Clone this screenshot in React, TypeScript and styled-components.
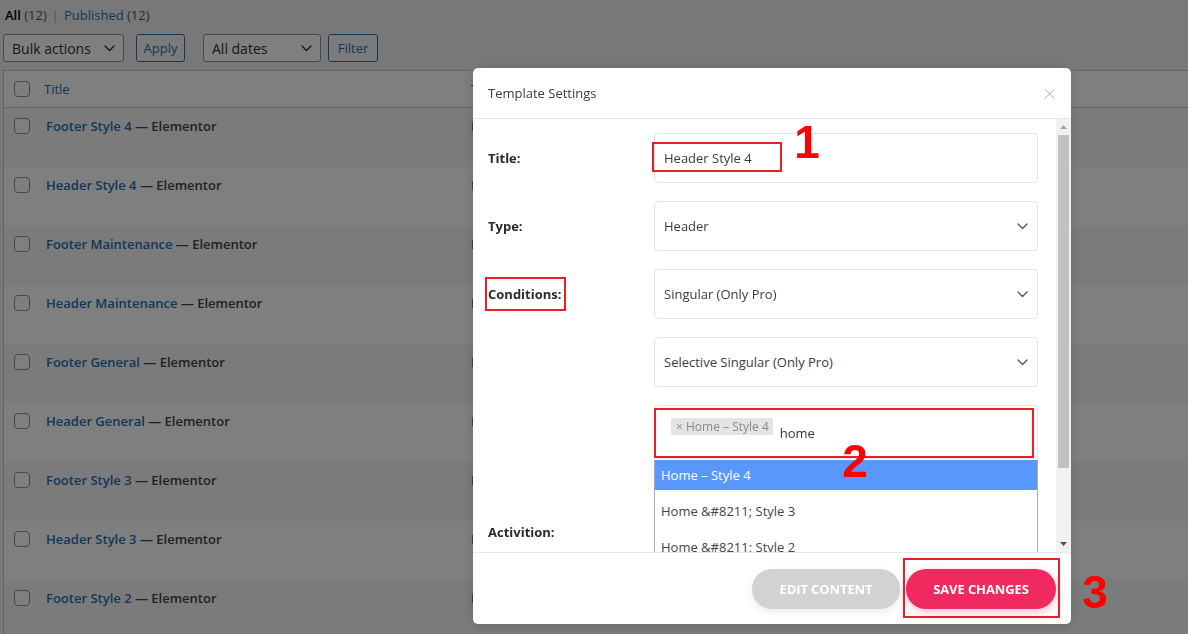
import React from "react";
import styled, { createGlobalStyle } from "styled-components";

const GlobalStyle = createGlobalStyle`
  html, body { margin: 0; padding: 0; }
  body {
    background: #f0f0f1;
    font-family: "Open Sans", "Noto Sans", Arial, sans-serif;
    font-size: 13px;
    color: #3c434a;
    overflow: hidden;
  }
  * { box-sizing: border-box; }
`;

/* ---------- WordPress list page (behind the modal) ---------- */
const Page = styled.div`
  padding: 6px 0 0 3px;
  width: 1188px;
  height: 634px;
  overflow: hidden;
`;

const Views = styled.div`
  padding-left: 2px;
  height: 20px;
  line-height: 18px;
  font-size: 13px;
  color: #50575e;
  b { color: #000; font-weight: 600; }
  a { color: #2271b1; text-decoration: none; }
  span.sep { margin: 0 5px; color: #a7aaad; }
`;

const TableNav = styled.div`
  margin-top: 8px;
  display: flex;
  align-items: center;
  height: 28px;
`;

const Select = styled.div<{ $w: number; $ml?: number }>`
  width: ${(p) => p.$w}px;
  margin-left: ${(p) => p.$ml ?? 0}px;
  height: 28px;
  border: 1px solid #8c8f94;
  border-radius: 3px;
  background: #fff;
  color: #2c3338;
  font-size: 14px;
  display: flex;
  align-items: center;
  justify-content: space-between;
  padding: 0 8px;
`;

const NavButton = styled.div<{ $w: number; $ml: number }>`
  width: ${(p) => p.$w}px;
  margin-left: ${(p) => p.$ml}px;
  height: 28px;
  border: 1px solid #2271b1;
  border-radius: 3px;
  background: #f6f7f7;
  color: #2271b1;
  font-size: 13px;
  display: flex;
  align-items: center;
  justify-content: center;
`;

const Table = styled.div`
  margin-top: 8px;
  border: 1px solid #c3c4c7;
  border-right: none;
  background: #fff;
`;

const HeadRow = styled.div`
  display: grid;
  grid-template-columns: 40px 425px 1fr;
  height: 37px;
  align-items: center;
  border-bottom: 1px solid #c3c4c7;
  a { color: #2271b1; }
`;

const Row = styled.div<{ $odd: boolean }>`
  display: grid;
  grid-template-columns: 40px 425px 1fr;
  height: 59px;
  align-items: start;
  padding-top: 8px;
  background: ${(p) => (p.$odd ? "#f6f7f7" : "#fff")};
`;

const CheckCell = styled.div`
  padding-left: 10px;
  display: flex;
`;

const Checkbox = styled.div<{ $mt?: number }>`
  width: 16px;
  height: 16px;
  margin-top: ${(p) => p.$mt ?? 0}px;
  border: 1px solid #8c8f94;
  border-radius: 4px;
  background: #fff;
`;

const TitleCell = styled.div<{ $pl: number }>`
  padding-left: ${(p) => p.$pl}px;
  line-height: 20px;
  font-size: 13px;
  white-space: nowrap;
`;

const RowTitle = styled.span`
  color: #2271b1;
  font-weight: 600;
  font-size: 13px;
`;

const PostState = styled.span`
  color: #3c434a;
  font-weight: 600;
`;

/* only a sliver of this column shows left of the modal */
const TypeCell = styled.div`
  margin-left: 2px;
  width: 4px;
  overflow: hidden;
  line-height: 20px;
  color: #3c434a;
`;

/* ---------- Overlay & modal ---------- */
const Backdrop = styled.div`
  position: fixed;
  inset: 0;
  background: rgba(0, 0, 0, 0.5);
`;

const Modal = styled.div`
  position: fixed;
  left: 473px;
  top: 68px;
  width: 598px;
  height: 556px;
  background: #fff;
  border-radius: 5px;
  display: flex;
  flex-direction: column;
  box-shadow: 0 2px 12px rgba(0, 0, 0, 0.15);
`;

const ModalHeader = styled.div`
  height: 51px;
  flex: none;
  display: flex;
  align-items: center;
  justify-content: space-between;
  padding: 0 15px;
  border-bottom: 1px solid #e6e6e6;
`;

const ModalTitle = styled.div`
  font-size: 13px;
  font-weight: 500;
  color: #3a3a3a;
`;

const Close = styled.div`
  color: #c3c3c3;
  font-size: 20px;
  line-height: 1;
  font-family: "DejaVu Sans", sans-serif;
  font-weight: 300;
  margin-right: -2px;
`;

const ModalBody = styled.div`
  flex: 1;
  display: flex;
  overflow: hidden;
`;

const Content = styled.div`
  flex: 1;
  position: relative;
  padding: 14px 18px 0 15px;
  overflow: hidden;
`;

const FieldRow = styled.div<{ $mb?: number }>`
  display: grid;
  grid-template-columns: 166px 384px;
  align-items: center;
  margin-bottom: ${(p) => p.$mb ?? 18}px;
`;

const Label = styled.div`
  font-weight: 700;
  font-size: 13px;
  color: #2b2b2b;
`;

const Field = styled.div`
  height: 50px;
  border: 1px solid #e3e5e8;
  border-radius: 4px;
  padding: 0 9px 0 9px;
  display: flex;
  align-items: center;
  justify-content: space-between;
  font-size: 13px;
  color: #3a3a3a;
  background: #fff;
`;

const MultiWrap = styled.div`
  position: relative;
`;

const MultiField = styled.div`
  height: 54px;
  border: 1px solid #e3e5e8;
  border-radius: 4px 4px 0 0;
  padding: 12px 0 0 16px;
  display: flex;
  align-items: flex-start;
`;

const Tag = styled.span`
  background: #e4e4e4;
  color: #8a8a8a;
  font-size: 12px;
  height: 17px;
  line-height: 17px;
  padding: 0 4px 0 5px;
  border-radius: 2px;
  white-space: nowrap;
`;

const Search = styled.span`
  margin: 7px 0 0 7px;
  font-size: 13px;
  color: #333;
  line-height: 16px;
`;

const Dropdown = styled.div`
  position: absolute;
  left: 0;
  top: 55px;
  width: 384px;
  background: #fff;
  border: 1px solid #aaa;
  border-top: none;
  z-index: 2;
`;

const Option = styled.div<{ $active?: boolean }>`
  padding: ${(p) => (p.$active ? "6px 6px" : "12px 6px 6px")};
  line-height: 18px;
  font-size: 13px;
  background: ${(p) => (p.$active ? "#5897fb" : "#fff")};
  color: ${(p) => (p.$active ? "#fff" : "#444")};
`;

const Scrollbar = styled.div`
  width: 15px;
  flex: none;
  background: #f1f1f1;
  display: flex;
  flex-direction: column;
  align-items: center;
`;

const Arrow = styled.div`
  height: 16px;
  width: 15px;
  display: flex;
  align-items: center;
  justify-content: center;
`;

const Thumb = styled.div`
  width: 11px;
  height: 333px;
  background: #c1c1c1;
`;

const Spacer = styled.div`
  flex: 1;
`;

const ModalFooter = styled.div`
  height: 72px;
  flex: none;
  border-top: 1px solid #e8e8e8;
  display: flex;
  align-items: center;
  justify-content: flex-end;
  gap: 6px;
  padding: 0 15px 0 0;
`;

const PillButton = styled.div<{ $w: number; $bg: string; $shadow: string }>`
  width: ${(p) => p.$w}px;
  height: 40px;
  border-radius: 20px;
  background: ${(p) => p.$bg};
  box-shadow: ${(p) => p.$shadow};
  color: #fff;
  font-weight: 700;
  font-size: 13px;
  text-transform: uppercase;
  display: flex;
  align-items: center;
  justify-content: center;
  letter-spacing: -0.1px;
`;

/* ---------- Annotations ---------- */
const MarkBox = styled.div<{ $l: number; $t: number; $w: number; $h: number }>`
  position: absolute;
  left: ${(p) => p.$l}px;
  top: ${(p) => p.$t}px;
  width: ${(p) => p.$w}px;
  height: ${(p) => p.$h}px;
  border: 2px solid #ee1c25;
  pointer-events: none;
  z-index: 5;
`;

const MarkNum = styled.div<{ $l: number; $t: number }>`
  position: absolute;
  left: ${(p) => p.$l}px;
  top: ${(p) => p.$t}px;
  width: 40px;
  text-align: center;
  font-family: "Liberation Sans", Arial, sans-serif;
  font-weight: 700;
  font-size: 46px;
  line-height: 46px;
  color: #fe0000;
  z-index: 5;
`;

const Chevron = ({ c = "#50575e", w = 11 }: { c?: string; w?: number }) => (
  <svg width={w} height="7" viewBox="0 0 11 7" fill="none">
    <polyline points="1,1 5.5,5.5 10,1" stroke={c} strokeWidth="1.4" strokeLinecap="round" strokeLinejoin="round" />
  </svg>
);

const Tri = ({ up }: { up: boolean }) => (
  <svg width="7" height="4" viewBox="0 0 7 4">
    <polygon points={up ? "0,4 3.5,0 7,4" : "0,0 7,0 3.5,4"} fill={up ? "#a3a3a3" : "#505050"} />
  </svg>
);

const rows = [
  ["Footer Style 4", "Footer"],
  ["Header Style 4", "Header"],
  ["Footer Maintenance", "Footer"],
  ["Header Maintenance", "Header"],
  ["Footer General", "Footer"],
  ["Header General", "Header"],
  ["Footer Style 3", "Footer"],
  ["Header Style 3", "Header"],
  ["Footer Style 2", "Footer"],
];

export default function App() {
  return (
    <>
      <GlobalStyle />
      <Page>
        <Views>
          <b>All</b> (12)<span className="sep">|</span>
          <a>Published</a> (12)
        </Views>
        <TableNav>
          <Select $w={121}>
            Bulk actions <Chevron c="#2c3338" w={11} />
          </Select>
          <NavButton $w={49} $ml={12}>Apply</NavButton>
          <Select $w={118} $ml={18}>
            All dates <Chevron c="#2c3338" w={11} />
          </Select>
          <NavButton $w={50} $ml={7}>Filter</NavButton>
        </TableNav>
        <Table>
          <HeadRow>
            <CheckCell>
              <Checkbox />
            </CheckCell>
            <TitleCell $pl={0}>
              <a>Title</a>
            </TitleCell>
            <TypeCell>T</TypeCell>
          </HeadRow>
          {rows.map(([t, type], i) => (
            <Row key={t} $odd={i % 2 === 0}>
              <CheckCell>
                <Checkbox $mt={2} />
              </CheckCell>
              <TitleCell $pl={2}>
                <RowTitle>{t}</RowTitle>
                <PostState> — Elementor</PostState>
              </TitleCell>
              <TypeCell>{type.charAt(0)}</TypeCell>
            </Row>
          ))}
        </Table>
      </Page>
      <Backdrop />
      <Modal>
        <ModalHeader>
          <ModalTitle>Template Settings</ModalTitle>
          <Close>×</Close>
        </ModalHeader>
        <ModalBody>
          <Content>
            <FieldRow>
              <Label>Title:</Label>
              <Field>Header Style 4</Field>
            </FieldRow>
            <FieldRow>
              <Label>Type:</Label>
              <Field>
                Header <Chevron />
              </Field>
            </FieldRow>
            <FieldRow>
              <Label>Conditions:</Label>
              <Field>
                Singular (Only Pro) <Chevron />
              </Field>
            </FieldRow>
            <FieldRow>
              <Label />
              <Field>
                Selective Singular (Only Pro) <Chevron />
              </Field>
            </FieldRow>
            <FieldRow $mb={48}>
              <Label />
              <MultiWrap>
                <MultiField>
                  <Tag>× Home – Style 4</Tag>
                  <Search>home</Search>
                </MultiField>
                <Dropdown>
                  <Option $active>Home – Style 4</Option>
                  <Option>Home &amp;#8211; Style 3</Option>
                  <Option>Home &amp;#8211; Style 2</Option>
                </Dropdown>
              </MultiWrap>
            </FieldRow>
            <FieldRow>
              <Label>Activition:</Label>
              <Field />
            </FieldRow>
          </Content>
          <Scrollbar>
            <Arrow>
              <Tri up />
            </Arrow>
            <Thumb />
            <Spacer />
            <Arrow>
              <Tri up={false} />
            </Arrow>
          </Scrollbar>
        </ModalBody>
        <ModalFooter>
          <PillButton $w={148} $bg="#d2d2d2" $shadow="0 3px 8px rgba(0,0,0,0.08)">
            Edit Content
          </PillButton>
          <PillButton $w={150} $bg="#f02a5e" $shadow="0 3px 10px rgba(240,42,94,0.3)">
            Save Changes
          </PillButton>
        </ModalFooter>

        <MarkBox $l={179} $t={74} $w={130} $h={30} />
        <MarkNum $l={314} $t={51}>1</MarkNum>
        <MarkBox $l={12} $t={209} $w={81} $h={34} />
        <MarkBox $l={181} $t={340} $w={380} $h={50} />
        <MarkNum $l={362} $t={370}>2</MarkNum>
        <MarkBox $l={430} $t={490} $w={157} $h={60} />
        <MarkNum $l={602} $t={501}>3</MarkNum>
      </Modal>
    </>
  );
}
